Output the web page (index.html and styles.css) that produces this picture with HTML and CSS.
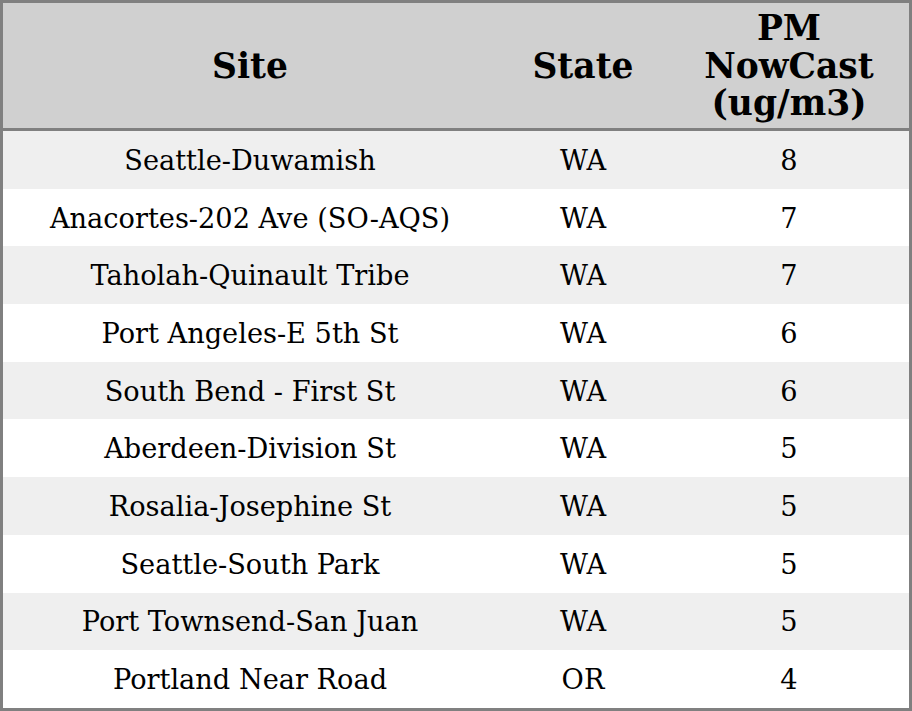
FILE: index.html
```html
<!DOCTYPE html>
<html>
<head>
<meta charset="utf-8">
<link rel="stylesheet" href="styles.css">
</head>
<body>
<table class="aq-table">
  <thead>
    <tr>
      <th class="col-site">Site</th>
      <th class="col-state">State</th>
      <th class="col-pm">PM<br>NowCast<br>(ug/m3)</th>
    </tr>
  </thead>
  <tbody>
    <tr><td>Seattle-Duwamish</td><td>WA</td><td>8</td></tr>
    <tr><td>Anacortes-202 Ave (SO-AQS)</td><td>WA</td><td>7</td></tr>
    <tr><td>Taholah-Quinault Tribe</td><td>WA</td><td>7</td></tr>
    <tr><td>Port Angeles-E 5th St</td><td>WA</td><td>6</td></tr>
    <tr><td>South Bend - First St</td><td>WA</td><td>6</td></tr>
    <tr><td>Aberdeen-Division St</td><td>WA</td><td>5</td></tr>
    <tr><td>Rosalia-Josephine St</td><td>WA</td><td>5</td></tr>
    <tr><td>Seattle-South Park</td><td>WA</td><td>5</td></tr>
    <tr><td>Port Townsend-San Juan</td><td>WA</td><td>5</td></tr>
    <tr><td>Portland Near Road</td><td>OR</td><td>4</td></tr>
  </tbody>
</table>
</body>
</html>
```
FILE: styles.css
```css
html, body {
  margin: 0;
  padding: 0;
  background: #ffffff;
}
.aq-table {
  width: 912px;
  height: 711px;
  border-collapse: collapse;
  border: 3px solid #808080;
  font-family: "DejaVu Serif", serif;
  color: #000;
  table-layout: fixed;
}
.aq-table th {
  background: #d0d0d0;
  font-weight: bold;
  font-size: 34.5px;
  line-height: 37.5px;
  height: 123px;
  padding: 2px 0 0 0;
  text-align: center;
  vertical-align: middle;
  border-bottom: 3px solid #808080;
}
.col-site { width: 494px; }
.col-state { width: 172px; }
.aq-table td {
  font-size: 27.2px;
  line-height: 32px;
  text-align: center;
  vertical-align: middle;
  padding: 2px 0 0 0;
  height: 55.7px;
}
.aq-table tbody tr:nth-child(odd) {
  background: #efefef;
}
```
